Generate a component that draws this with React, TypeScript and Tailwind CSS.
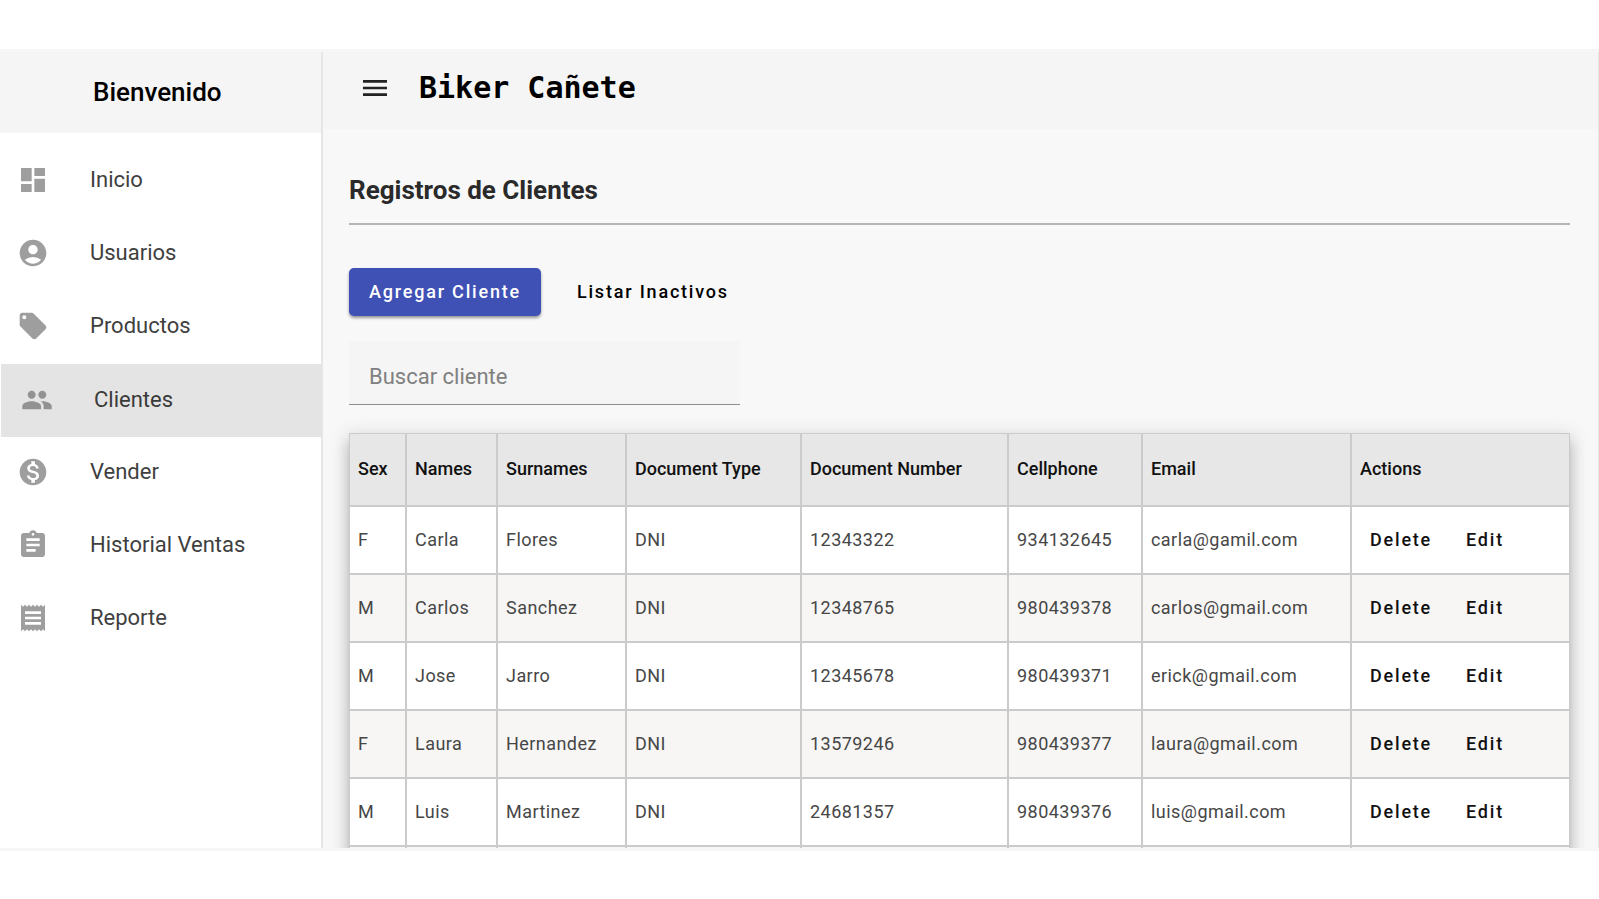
import type { ComponentType } from "react";
import {
  MdAccountCircle,
  MdAssignment,
  MdDashboard,
  MdLocalOffer,
  MdMenu,
  MdMonetizationOn,
  MdPeople,
  MdReceipt,
} from "react-icons/md";

type NavItem = {
  label: string;
  icon: ComponentType<{ className?: string }>;
  active?: boolean;
};

const navItems: NavItem[] = [
  { label: "Inicio", icon: MdDashboard },
  { label: "Usuarios", icon: MdAccountCircle },
  { label: "Productos", icon: MdLocalOffer },
  { label: "Clientes", icon: MdPeople, active: true },
  { label: "Vender", icon: MdMonetizationOn },
  { label: "Historial Ventas", icon: MdAssignment },
  { label: "Reporte", icon: MdReceipt },
];

const columns = [
  { title: "Sex", width: "w-[57px]" },
  { title: "Names", width: "w-[91px]" },
  { title: "Surnames", width: "w-[129px]" },
  { title: "Document Type", width: "w-[175px]" },
  { title: "Document Number", width: "w-[207px]" },
  { title: "Cellphone", width: "w-[134px]" },
  { title: "Email", width: "w-[209px]" },
  { title: "Actions", width: "w-auto" },
];

const clients = [
  ["F", "Carla", "Flores", "DNI", "12343322", "934132645", "carla@gamil.com"],
  ["M", "Carlos", "Sanchez", "DNI", "12348765", "980439378", "carlos@gmail.com"],
  ["M", "Jose", "Jarro", "DNI", "12345678", "980439371", "erick@gmail.com"],
  ["F", "Laura", "Hernandez", "DNI", "13579246", "980439377", "laura@gmail.com"],
  ["M", "Luis", "Martinez", "DNI", "24681357", "980439376", "luis@gmail.com"],
];

const cell = "border-b-2 border-r-2 border-[#cbcbcb] pl-2 last:border-r-0";

function Sidebar() {
  return (
    <aside className="flex w-[323px] shrink-0 flex-col border-r-2 border-[#e6e6e6] bg-white">
      <div className="flex h-[81px] shrink-0 items-center bg-[#f5f5f5] pb-0.5 pl-[93px]">
        <span className="text-[26px] font-medium leading-8 text-black">Bienvenido</span>
      </div>
      <nav className="flex flex-col py-3">
        {navItems.map(({ label, icon: Icon, active }) => (
          <a
            key={label}
            href="#"
            className={
              active
                ? "ml-px flex h-[73px] items-center gap-[41px] bg-[#e4e4e4] pb-0.5 pl-5 text-[#3a3a3a]"
                : "flex h-[73px] items-center gap-[41px] pb-[3px] pl-[17px] text-[#3f3f3f]"
            }
          >
            <Icon className={active ? "size-8 text-[#929292]" : "size-8 text-[#9e9e9e]"} />
            <span className="text-[22px] leading-7">{label}</span>
          </a>
        ))}
      </nav>
    </aside>
  );
}

function ClientTable() {
  return (
    <table className="w-full table-fixed border-separate border-spacing-0 border border-[#cbcbcb] bg-white text-left text-lg shadow-[0_7px_7px_-4px_rgba(0,0,0,0.2),0_10px_13px_1px_rgba(0,0,0,0.14),0_4px_18px_3px_rgba(0,0,0,0.12)]">
      <thead>
        <tr className="h-[73px] bg-[#e7e7e7] text-[#111]">
          {columns.map(({ title, width }) => (
            <th key={title} scope="col" className={`${cell} ${width} whitespace-nowrap pb-0.5 font-medium`}>
              {title}
            </th>
          ))}
        </tr>
      </thead>
      <tbody>
        {clients.map((client) => (
          <tr key={client[5]} className="h-[68px] text-[#464646] even:bg-[#f7f6f5]">
            {client.map((value, i) => (
              <td key={i} className={`${cell} whitespace-nowrap tracking-wide`}>
                {value}
              </td>
            ))}
            <td className={cell}>
              <div className="flex gap-[34px] pl-2.5 text-[#111]">
                <button type="button" className="font-medium tracking-widest">
                  Delete
                </button>
                <button type="button" className="font-medium tracking-widest">
                  Edit
                </button>
              </div>
            </td>
          </tr>
        ))}
        <tr className="h-[68px] bg-[#f7f6f5]">
          {columns.map(({ title }) => (
            <td key={title} className={cell} />
          ))}
        </tr>
      </tbody>
    </table>
  );
}

export default function App() {
  return (
    <div className="flex h-screen flex-col bg-white pb-12 pt-[49px] font-['Roboto',sans-serif]">
      <div className="flex min-h-0 flex-1 overflow-hidden border-y-[3px] border-[#f6f6f6] bg-[#f8f8f8]">
        <Sidebar />
        <div className="flex min-w-0 flex-1 flex-col border-r border-[#e6e6e6]">
          <header className="flex h-[77px] shrink-0 items-center gap-7 bg-[#f5f5f5] pb-[5px] pl-9">
            <button type="button" aria-label="Menu" className="text-[#222]">
              <MdMenu className="size-8" />
            </button>
            <span className="font-['DejaVu_Sans_Mono',monospace] text-[30px] font-bold leading-9 text-black">
              Biker Cañete
            </span>
          </header>
          <main className="flex flex-col pl-[26px] pr-7 pt-[45px]">
            <h1 className="text-[26px] font-bold leading-8 text-[#2a2a2a]">Registros de Clientes</h1>
            <hr className="mt-[17px] border-t-2 border-[#b4b6b4]" />
            <div className="mt-[43px] flex items-center">
              <button
                type="button"
                className="h-12 rounded-[5px] bg-[#3f51b5] px-5 text-lg font-medium tracking-widest text-white shadow-[0_2px_3px_rgba(0,0,0,0.4)]"
              >
                Agregar Cliente
              </button>
              <button type="button" className="h-12 px-9 text-lg font-medium tracking-widest text-black">
                Listar Inactivos
              </button>
            </div>
            <input
              type="text"
              aria-label="Buscar cliente"
              placeholder="Buscar cliente"
              className="mt-[25px] h-16 w-[391px] border-b border-[#8f8f8f] bg-[#f5f5f5] px-5 pt-2 text-[22px] text-[#333] outline-none placeholder:text-[#808080]"
            />
            <div className="mt-7">
              <ClientTable />
            </div>
          </main>
        </div>
      </div>
    </div>
  );
}
